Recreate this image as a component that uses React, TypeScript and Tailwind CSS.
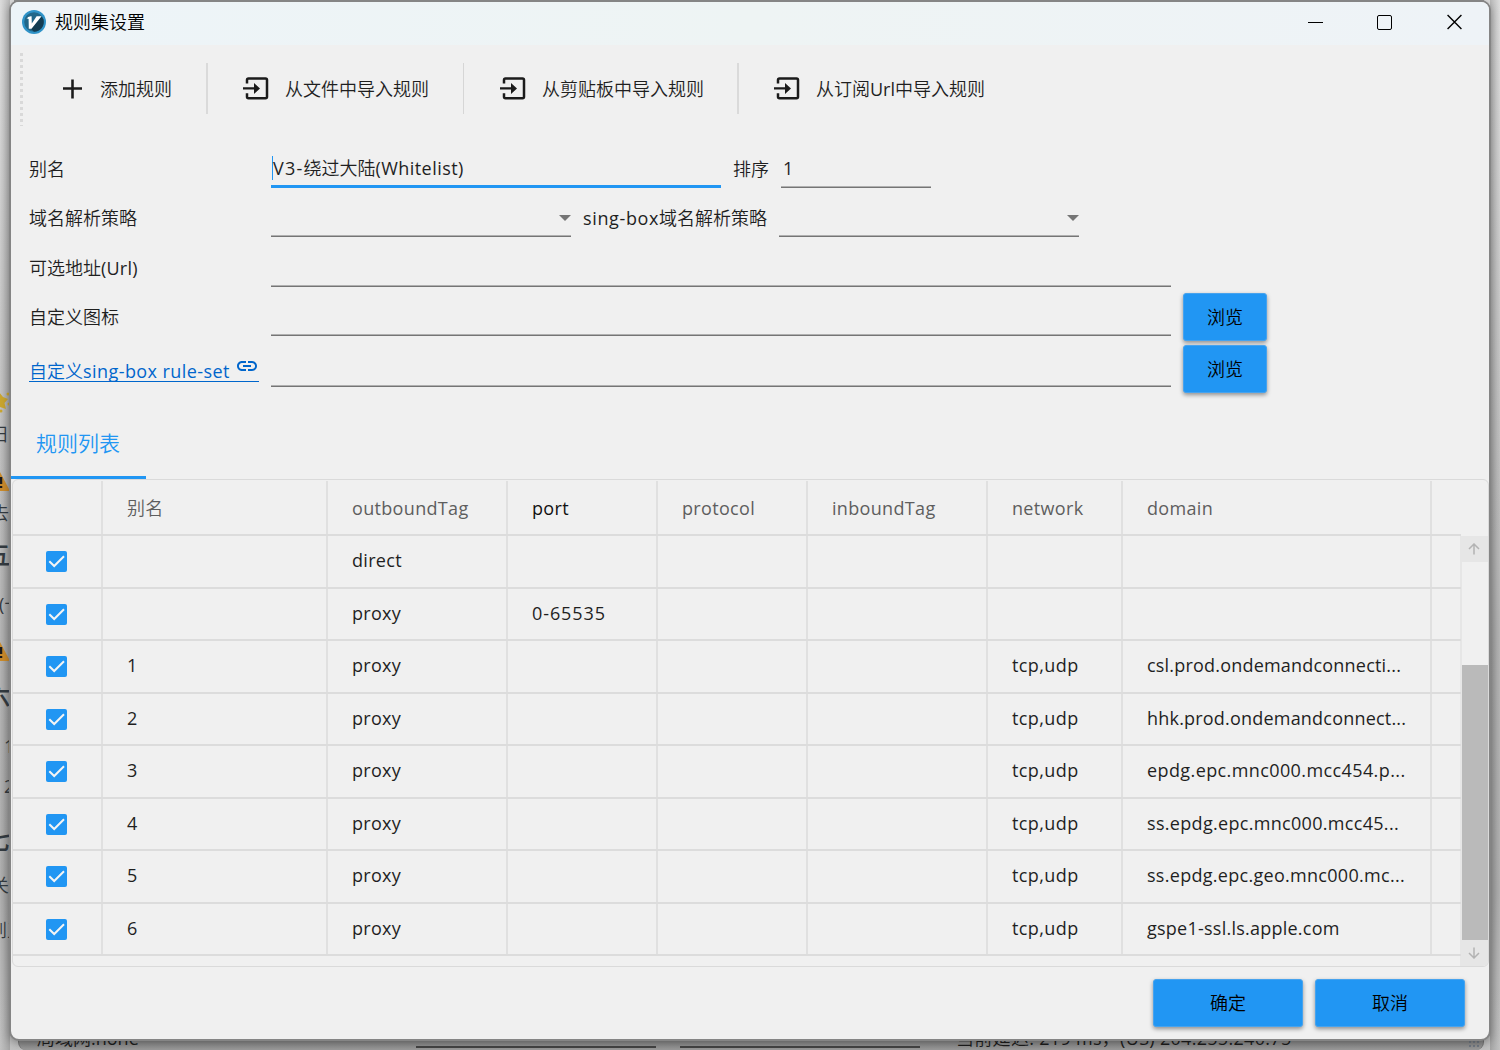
import React from "react";

const FONT = "font-['Open_Sans','Noto_Sans_CJK_SC_DemiLight','Noto_Sans_CJK_SC',sans-serif]";

type Row = { name: string; tag: string; port: string; network: string; domain: string; spacing: string };

const rows: Row[] = [
  { name: "", tag: "direct", port: "", network: "", domain: "", spacing: "" },
  { name: "", tag: "proxy", port: "0-65535", network: "", domain: "", spacing: "" },
  { name: "1", tag: "proxy", port: "", network: "tcp,udp", domain: "csl.prod.ondemandconnecti...", spacing: "tracking-[0.200px]" },
  { name: "2", tag: "proxy", port: "", network: "tcp,udp", domain: "hhk.prod.ondemandconnect...", spacing: "tracking-[0.200px]" },
  { name: "3", tag: "proxy", port: "", network: "tcp,udp", domain: "epdg.epc.mnc000.mcc454.p...", spacing: "tracking-[0.400px]" },
  { name: "4", tag: "proxy", port: "", network: "tcp,udp", domain: "ss.epdg.epc.mnc000.mcc45...", spacing: "tracking-[0.310px]" },
  { name: "5", tag: "proxy", port: "", network: "tcp,udp", domain: "ss.epdg.epc.geo.mnc000.mc...", spacing: "tracking-[0.290px]" },
  { name: "6", tag: "proxy", port: "", network: "tcp,udp", domain: "gspe1-ssl.ls.apple.com", spacing: "tracking-[0.240px]" },
];

const COLS = "grid grid-cols-[90px_225px_180px_150px_150px_180px_135px_309px_29px]";
const CELL = "border-r-2 border-[#e0e0e0] pl-6 whitespace-nowrap overflow-hidden";

function Logo() {
  return (
    <svg width="24" height="24" viewBox="0 0 24 24">
      <circle cx="12" cy="12" r="12" fill="#2f93c8" />
      <circle cx="12" cy="12" r="9.800" fill="#226789" />
      <path d="M9 19 L19.500 6.500 L21.500 9.500 A10 10 0 0 1 12 21.800 Z" fill="#123c52" />
      <path d="M4.500 8.800 Q6 5.800 9.600 6.200 L9.800 13.500 L14.600 6.200 H19.500 L9.500 18.800 H6.800 L6.600 9 Q5.800 8.300 4.500 8.800 Z" fill="#fff" />
    </svg>
  );
}

function ImportIcon() {
  return (
    <svg width="26" height="23" viewBox="0 0 26 23" fill="none" className="shrink-0">
      <path d="M4 6.500 V3 Q4 1.500 5.500 1.500 H22.500 Q24 1.500 24 3 V19.700 Q24 21.200 22.500 21.200 H5.500 Q4 21.200 4 19.700 V16.200" stroke="#1b1b1b" strokeWidth="2.500" />
      <path d="M0 10.200 H11 V5.900 L17 11.400 L11 16.900 V12.600 H0 Z" fill="#1b1b1b" />
    </svg>
  );
}

function ToolButton({ label, className, icon, gap }: { label: string; className: string; icon: React.ReactNode; gap: string }) {
  return (
    <div className={`flex h-[51px] items-center ${className}`}>
      {icon}
      <span className={`whitespace-nowrap pt-px ${gap}`}>{label}</span>
    </div>
  );
}

function Line({ className }: { className: string }) {
  return <div className={`h-[2px] border-t border-b border-t-[#b0b0b0] border-b-[#757575] ${className}`} />;
}

function Button({ label, className }: { label: string; className: string }) {
  return (
    <button className={`flex h-12 items-center justify-center rounded-[3px] border border-[#47a3ee] bg-[#2196f3] text-black shadow-[0_2px_4px_rgba(0,0,0,0.4)] ${className}`}>
      {label}
    </button>
  );
}

function Select() {
  return (
    <div className="flex h-[49px] w-[300px] flex-col justify-between">
      <div className="flex h-[33px] items-end justify-end">
        <svg width="12" height="6" viewBox="0 0 12 6"><path d="M0 0 H12 L6 6 Z" fill="#757575" /></svg>
      </div>
      <Line className="w-full" />
    </div>
  );
}

function Check() {
  return (
    <svg width="21" height="21" viewBox="0 0 21 21">
      <rect width="21" height="21" rx="2" fill="#2196f3" />
      <path d="M3.300 10.200 L8.200 15 L18 5.300" stroke="#f4f4f4" strokeWidth="2" fill="none" />
    </svg>
  );
}

function Backdrop() {
  const bits: [string, string][] = [
    ["top-[422px] text-[18px] left-[-9px]", "日前"],
    ["top-[501px] text-[18px] left-[-9px]", "去掉"],
    ["top-[543px] text-[24px] font-bold left-[-14px]", "五"],
    ["top-[592px] text-[18px] left-[-1px]", "(十"],
    ["top-[683px] text-[24px] font-bold left-[-14px]", "六"],
    ["top-[734px] text-[18px] left-[4px]", "1"],
    ["top-[774px] text-[18px] left-[4px]", "2"],
    ["top-[828px] text-[24px] font-bold left-[-14px]", "七"],
    ["top-[873px] text-[18px] left-[-9px]", "关于"],
    ["top-[918px] text-[18px] left-[-11px]", "到五"],
  ];
  return (
    <div className="absolute inset-0 overflow-hidden bg-[linear-gradient(180deg,#dcdcdc_0,#c9c9c9_30%,#b5b5b5_60%,#b0b0b0_85%,#c2c2c2_100%)]">
      <div className="absolute inset-y-0 left-0 w-[10px] bg-[linear-gradient(90deg,transparent,rgba(0,0,0,0.16))]" />
      <div className="absolute inset-y-0 right-0 w-[10px] bg-[linear-gradient(270deg,transparent,rgba(0,0,0,0.16))]" />
      <div className="absolute left-[14px] top-0 h-[14px] w-[1470px] overflow-hidden bg-[#929292]">
        <div className="absolute left-4 top-0 h-2 w-6 bg-[#a34b4b]" />
        <div className="absolute left-[56px] top-[-14px] whitespace-nowrap text-[16px] leading-5 text-[#6d6d6d]">v2rayN - V7.10.5 - X64 - 以管理员身份运行</div>
      </div>
      {bits.map(([c, t]) => (
        <div key={t} className={`absolute whitespace-nowrap leading-[24px] text-[#333a40] ${c}`}>{t}</div>
      ))}
      <svg className="absolute left-[-9px] top-[391px]" width="19" height="22" viewBox="0 0 19 22">
        <path d="M8 1 L12 6 L17 8 L13.500 12 L15 18 L9 16 L3 19 Z" fill="#c9a52f" />
        <circle cx="17" cy="3" r="1.500" fill="#c9a52f" /><circle cx="18" cy="13" r="1.500" fill="#c9a52f" /><circle cx="10" cy="20" r="1.500" fill="#c9a52f" />
      </svg>
      {["top-[472px]", "top-[642px]"].map((c) => (
        <svg key={c} className={`absolute left-[-10px] ${c}`} width="20" height="19" viewBox="0 0 20 19">
          <path d="M10 0 L20 19 H0 Z" fill="#c98a2b" /><path d="M11 5 V12 M11 14 V16" stroke="#1b1b1b" strokeWidth="2.500" />
        </svg>
      ))}
      <div className="absolute bottom-0 left-[18px] h-[30px] w-[1466px] overflow-hidden rounded-b-lg border-x border-[#757575] bg-[linear-gradient(180deg,#808080_50%,#9c9c9c)]">
        <span className="absolute left-[18px] top-[6px] whitespace-nowrap text-[18px] leading-6 text-[#1e1e1e]">局域网:none</span>
        <div className="absolute left-[397px] top-[26px] h-[2px] w-[240px] bg-[#454545]" />
        <div className="absolute left-[661px] top-[26px] h-[2px] w-[240px] bg-[#454545]" />
        <span className="absolute left-[937px] top-[6px] whitespace-nowrap text-[18px] leading-6 tracking-[0.300px] text-[#1e1e1e]">当前延迟: 219 ms，(US) 204.255.240.75</span>
        <div className="absolute right-[3px] top-[20px] h-[9px] w-[12px] bg-[radial-gradient(circle,#747c86_1px,transparent_1.500px)] bg-[size:4px_4px]" />
      </div>
    </div>
  );
}

export default function App() {
  return (
    <div className={`relative h-[1050px] w-[1500px] overflow-hidden text-[18px] font-normal leading-6 text-[#1f1f1f] ${FONT}`}>
      <Backdrop />
      <div className="relative flex h-[1050px] flex-col px-[9px] pt-0 pb-[9px]">
        <div className="flex h-[1041px] flex-col overflow-hidden rounded-[10px] border-2 border-[#858585] bg-[#f0f0f0] shadow-[0_3px_8px_rgba(0,0,0,0.3)]">
          <header className="flex h-[43px] shrink-0 items-center bg-[linear-gradient(90deg,#edf4f8,#eef4f4_50%,#eef3f7)] pb-[3px] pl-[11px]">
            <Logo />
            <span className="ml-[9px] text-black">规则集设置</span>
            <div className="ml-auto flex items-center pr-[27px]">
              <div className="mr-[54px] h-px w-[15px] bg-black" />
              <div className="mr-[55px] h-[15px] w-[15px] rounded-[2px] border-[1.500px] border-black" />
              <svg width="15" height="16" viewBox="0 0 16 16"><path d="M0.600 0.600 L15.400 15.400 M15.400 0.600 L0.600 15.400" stroke="#000" strokeWidth="1.500" /></svg>
            </div>
          </header>

          <div className="flex h-[93px] shrink-0 items-start pt-[8px] pl-[9px]">
            <div className="h-[73px] w-[3px] bg-[repeating-linear-gradient(180deg,#d9d9d9_0,#d9d9d9_3px,transparent_3px,transparent_6px)]" />
            <div className="flex pt-[10px]">
              <ToolButton
                label="添加规则" className="w-[183px] pl-[40px]" gap="ml-[18px]"
                icon={<svg width="19" height="20" viewBox="0 0 20 20" className="shrink-0"><path d="M0 9.500 H20 M10 0 V20" stroke="#1b1b1b" strokeWidth="2.700" /></svg>}
              />
              <ToolButton label="从文件中导入规则" className="w-[257px] border-l-2 border-[#dadada] pl-[35px]" gap="ml-4" icon={<ImportIcon />} />
              <ToolButton label="从剪贴板中导入规则" className="w-[274px] border-l border-[#d6d6d6] pl-[36px]" gap="ml-4" icon={<ImportIcon />} />
              <ToolButton label="从订阅Url中导入规则" className="border-l-2 border-[#dadada] pl-[35px]" gap="ml-4" icon={<ImportIcon />} />
            </div>
          </div>

          <div className="flex h-[50px] shrink-0 items-start pl-[18px]">
            <span className="w-[242px] pt-[19px]">别名</span>
            <div className="flex h-[50px] w-[450px] flex-col justify-end border-b-3 border-[#2196f3]">
              <div className="mb-[5px] ml-px flex h-6 items-center border-l border-[#2196f3] text-[18px]">
                <span className="whitespace-nowrap"><span className="tracking-[1.200px]">V3-</span>绕过大陆<span className="tracking-[0.450px]">(Whitelist)</span></span>
              </div>
            </div>
            <span className="ml-3 w-12 pt-[19px]">排序</span>
            <div className="flex h-[50px] w-[150px] flex-col justify-end">
              <span className="mb-[6px] pl-[2px]">1</span>
              <Line className="w-full" />
            </div>
          </div>
          <div className="flex h-[49px] shrink-0 items-start pl-[18px]">
            <span className="w-[242px] pt-[18px]">域名解析策略</span>
            <Select />
            <span className="ml-3 w-[196px] whitespace-nowrap pt-[18px]"><span className="tracking-[0.630px]">sing-box</span>域名解析策略</span>
            <Select />
          </div>
          <div className="flex h-[50px] shrink-0 items-start pl-[18px]">
            <span className="w-[242px] pt-[19px]">可选地址<span className="tracking-[0.200px]">(Url)</span></span>
            <Line className="mt-[48px] w-[900px]" />
          </div>
          <div className="flex h-[58px] shrink-0 items-start pl-[18px]">
            <span className="w-[242px] pt-[18px]">自定义图标</span>
            <Line className="mt-[47px] w-[900px]" />
            <Button label="浏览" className="mt-[6px] ml-3 w-[84px]" />
          </div>
          <div className="flex h-[60px] shrink-0 items-start pl-[18px]">
            <div className="w-[242px] pt-[12px]">
              <div className="flex h-[25px] w-[230px] items-end border-b border-[#0066cc] text-[#0066cc]">
                <span className="whitespace-nowrap leading-[20px]">自定义<span className="tracking-[0.430px]">sing-box rule-set</span></span>
                <svg className="mb-[10px] ml-auto mr-[2px]" width="20" height="10" viewBox="2 7 20 10" preserveAspectRatio="none">
                  <path fill="#0066cc" d="M3.900 12c0-1.710 1.390-3.100 3.100-3.100h4V7H7c-2.760 0-5 2.240-5 5s2.240 5 5 5h4v-1.900H7c-1.710 0-3.100-1.390-3.100-3.100zM8 13h8v-2H8v2zm9-6h-4v1.900h4c1.710 0 3.100 1.390 3.100 3.100s-1.390 3.100-3.100 3.100h-4V17h4c2.760 0 5-2.240 5-5s-2.240-5-5-5z" />
                </svg>
              </div>
            </div>
            <Line className="mt-[40px] w-[900px]" />
            <Button label="浏览" className="ml-3 w-[84px]" />
          </div>

          <div className="flex h-[74px] shrink-0 items-start">
            <div className="flex h-[74px] w-[135px] items-center border-b-3 border-[#2196f3] pt-[5px] pl-[25px] text-[21px] text-[#2196f3]">规则列表</div>
          </div>

          <div className="ml-px flex h-[488px] shrink-0 flex-col overflow-hidden rounded-[6px] border border-[#dadada]">
            <div className={`${COLS} h-[56px] w-[1448px] shrink-0 border-b-2 border-[#dcdcdc] pt-px text-[#5e5e5e] tracking-[0.330px]`}>
              {["", "别名", "outboundTag", "port", "protocol", "inboundTag", "network", "domain"].map((h, i) => (
                <div key={i} className={`${CELL} flex items-center ${h === "port" ? "text-[#111]" : ""}`}>{h}</div>
              ))}
              <div />
            </div>
            <div className="flex min-h-0 flex-1">
              <div className="w-[1449px] shrink-0 border-r-2 border-[#e6e6e6]">
                {rows.map((r, i) => (
                  <div key={i} className={`${COLS} w-[1448px] border-b-2 border-[#dcdcdc] ${i % 2 ? "h-[52px]" : "h-[53px]"}`}>
                    <div className="flex items-center border-r-2 border-[#e0e0e0] pl-[33px]"><Check /></div>
                    {[
                      [r.name, ""],
                      [r.tag, "tracking-[0.300px]"],
                      [r.port, "tracking-[0.900px]"],
                      ["", ""],
                      ["", ""],
                      [r.network, "tracking-[0.400px]"],
                      [r.domain, r.spacing],
                    ].map(([t, s], j) => (
                      <div key={j} className={`${CELL} flex items-center ${i % 2 ? "pb-[2px]" : "pb-[4px]"} ${s}`}>{t}</div>
                    ))}
                    <div />
                  </div>
                ))}
              </div>
              <div className="flex w-[26px] flex-col">
                <div className="flex h-[26px] items-center justify-center bg-[#e6e6e6] pr-[3px]">
                  <svg width="12" height="12" viewBox="0 0 12 12" fill="none" stroke="#b3b3b3" strokeWidth="1.500"><path d="M6 11.500 V1.500 M1 6 L6 1 L11 6" /></svg>
                </div>
                <div className="h-[103px]" />
                <div className="h-[275px] bg-[#bababa]" />
                <div className="flex flex-1 items-center justify-center bg-[#e6e6e6] pr-[3px]">
                  <svg width="12" height="12" viewBox="0 0 12 12" fill="none" stroke="#b3b3b3" strokeWidth="1.500"><path d="M6 0.500 V10.500 M1 6 L6 11 L11 6" /></svg>
                </div>
              </div>
            </div>
          </div>

          <footer className="flex justify-end gap-3 pt-3 pr-6">
            <Button label="确定" className="w-[150px]" />
            <Button label="取消" className="w-[150px]" />
          </footer>
        </div>
      </div>
    </div>
  );
}
